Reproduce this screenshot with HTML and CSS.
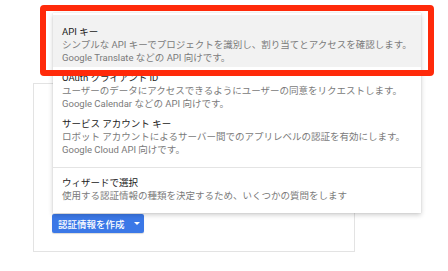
FILE: index.html
```html
<!DOCTYPE html>
<html lang="ja">
<head>
  <meta charset="UTF-8">
  <meta name="viewport" content="width=device-width, initial-scale=1.0">
  <title>認証情報を作成</title>
  <link rel="stylesheet" href="styles.css">
</head>

<body>
  <div class="page">
    <div class="card">
      <button class="create-btn">認証情報を作成 <span class="caret"></span></button>
    </div>

    <div class="menu">
      <div class="menu-item active">
        <div class="item-title">API キー</div>
        <div class="item-desc">シンプルな API キーでプロジェクトを識別し、割り当てとアクセスを確認します。</div>
        <div class="item-desc">Google Translate などの API 向けです。</div>
      </div>
      <div class="menu-item">
        <div class="item-title">OAuth クライアント ID</div>
        <div class="item-desc">ユーザーのデータにアクセスできるようにユーザーの同意をリクエストします。</div>
        <div class="item-desc">Google Calendar などの API 向けです。</div>
      </div>
      <div class="menu-item">
        <div class="item-title">サービス アカウント キー</div>
        <div class="item-desc">ロボット アカウントによるサーバー間でのアプリレベルの認証を有効にします。</div>
        <div class="item-desc">Google Cloud API 向けです。</div>
      </div>
      <div class="menu-item wizard">
        <div class="item-title">ウィザードで選択</div>
        <div class="item-desc">使用する認証情報の種類を決定するため、いくつかの質問をします</div>
      </div>
    </div>

    <div class="highlight"></div>
  </div>
</body>
</html>
```

FILE: styles.css
```css
body {
  margin: 0;
  background-color: #fff;
  font-family: Roboto, "Noto Sans CJK JP", sans-serif;
  font-size: 9.5px;
}

.page {
  position: relative;
  width: 448px;
  height: 271px;
  padding: 83px 0 0 33px;
  box-sizing: border-box;
}

.card {
  width: 322px;
  height: 169px;
  box-sizing: border-box;
  border: 1px solid #e3e3e3;
  display: flex;
  align-items: flex-end;
  padding: 0 0 18px 18px;
}

.create-btn {
  display: flex;
  align-items: center;
  height: 19px;
  width: 92px;
  padding: 0 0 0 6px;
  background-color: #3b78e7;
  color: #fff;
  border: none;
  border-radius: 2px;
  font-family: inherit;
  font-size: 9.5px;
  font-weight: 500;
  box-shadow: 0 1px 1px rgba(0, 0, 0, 0.15);
}

.caret {
  display: inline-block;
  margin-left: 9px;
  border-left: 3px solid transparent;
  border-right: 3px solid transparent;
  border-top: 3px solid #fff;
}

.menu {
  position: absolute;
  left: 53px;
  top: 13px;
  width: 368px;
  padding: 2px 0 2px;
  background-color: #fff;
  box-shadow: 0 2px 5px rgba(0, 0, 0, 0.2), 0 0 1px rgba(0, 0, 0, 0.15);
}

.menu-item {
  padding: 4px 9px 3px;
  line-height: 13px;
}

.menu-item.active {
  background-color: #f2f2f2;
  padding-top: 9.5px;
}

.menu-item.wizard {
  margin-top: 8px;
  border-top: 1px solid #e4e4e4;
  padding: 8px 9px 9px;
}

.item-title {
  color: #212121;
}

.item-desc {
  color: #7a7a7a;
  white-space: nowrap;
}

.highlight {
  position: absolute;
  left: 40px;
  top: 5px;
  width: 394px;
  height: 71px;
  box-sizing: border-box;
  border: 6px solid #ff2a0a;
  border-radius: 4px;
}
```
